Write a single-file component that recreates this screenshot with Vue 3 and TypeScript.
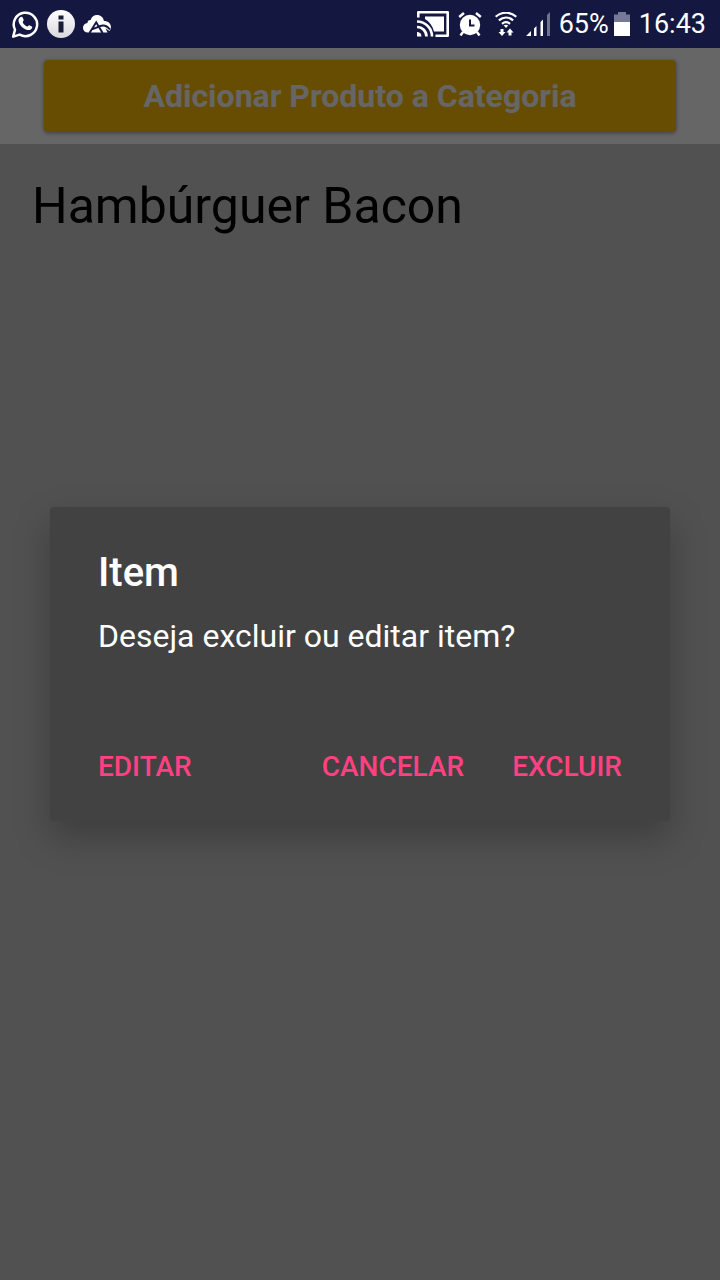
<script setup lang="ts">
import { ref } from 'vue'

interface Product {
  id: number
  name: string
}

const products = ref<Product[]>([{ id: 1, name: 'Hambúrguer Bacon' }])
const battery = '65%'
const time = '16:43'
</script>

<template>
  <div class="screen">
    <header class="status">
      <div class="notifications">
        <svg width="28" height="30" viewBox="0 0 28 30" aria-label="WhatsApp">
          <path d="M2.200 27.600 4 20.700A11.700 11.700 0 1 1 8.700 25.600Z" fill="none" stroke="#fff" stroke-width="2.500" stroke-linejoin="round" />
          <path d="M9.200 8.300C10 7.500 11.300 7.500 11.700 8.500L12.700 11C12.900 11.700 11.600 12.900 11.700 13.300C12.600 15.300 14 16.700 16.100 17.600C16.700 17.800 17.500 16 18.200 16.200L20.900 17.500C21.700 18 20.900 19.900 19.900 20.500C17.700 21.900 14.400 20.600 12.100 18.900C9.800 17.100 7.900 14.600 7.500 12C7.300 10.500 8.200 9.100 9.200 8.300Z" fill="#fff" />
        </svg>
        <svg width="28" height="28" viewBox="0 0 28 28" aria-label="Informação">
          <defs>
            <linearGradient id="disc" x1="0" y1="0" x2="0" y2="1">
              <stop offset="0" stop-color="#fff" />
              <stop offset="1" stop-color="#d9d9de" />
            </linearGradient>
          </defs>
          <circle cx="14" cy="14" r="14" fill="url(#disc)" />
          <path d="M11.500 5.500h5v4h-5ZM11.500 11.500h5v11h-5Z" fill="#1a1d38" />
        </svg>
        <svg width="28" height="20" viewBox="0 0 28 20" aria-label="Nuvem">
          <path d="M5 18.600C2 18.600 0 16.700 0 13.800C0 11 1.900 9.200 4.500 9C4.300 7.200 5.700 5.700 7.600 5.900C8.700 2.700 11 1 14 1C17.800 1 20.400 3.500 20.900 7C24.900 6.900 27.700 9.300 27.900 12.700C28.100 14.300 27.500 15.900 26.400 17.100L22.600 14.200L24.500 18.600Z" fill="#fff" />
          <path d="M6.500 19 13.200 8.300 19.600 19M8.700 15.200C13 14.600 15.500 11.800 19.800 11.400C22.700 11.200 25 13 27 15.500" fill="none" stroke="#141840" stroke-width="2" />
        </svg>
      </div>
      <div class="system">
        <svg width="32" height="26" viewBox="0 0 32 26" aria-label="Transmitir tela">
          <path d="M1.300 6.500V1.300h29.400v23.400H18.500" fill="none" stroke="#fff" stroke-width="2.600" stroke-linejoin="round" />
          <path d="M8 5.500h19v15H17C15.500 15 12.500 10.500 8 8Z" fill="#fff" />
          <path d="M0 10.500A15 15 0 0 1 15 25.500M0 16A9.500 9.500 0 0 1 9.500 25.500" fill="none" stroke="#fff" stroke-width="2.700" />
          <path d="M0 21A4.500 4.500 0 0 1 4.500 25.500H0Z" fill="#fff" />
        </svg>
        <svg width="24" height="24" viewBox="0 0 24 24" aria-label="Alarme">
          <circle cx="12" cy="13" r="10.200" fill="#fff" />
          <path d="M1.200 5 6 1M22.800 5 18 1M5 20 2.500 23.500M19 20l2.500 3.500" fill="none" stroke="#fff" stroke-width="2.500" />
          <path d="M12 7.500V13.500H16.500" fill="none" stroke="#141840" stroke-width="2" />
        </svg>
        <svg width="26" height="24" viewBox="-4 0 26 24" aria-label="Wi-Fi">
          <path d="M.7 4.800C6.700-.6 15.300-.6 21.300 4.800M3.900 8.400C8.300 4.500 13.700 4.500 18.100 8.400M7 11.800C9.500 9.700 12.500 9.700 15 11.800" fill="none" stroke="#fff" stroke-width="2.200" />
          <path d="M8.800 13.500C10.200 12.500 11.800 12.500 13.200 13.500L11 16ZM5.500 17h3v3h2L7 24 3.500 20h2ZM13.500 23.500v-3h-2L15 16.500l3.500 4h-2v3Z" fill="#fff" />
        </svg>
        <svg width="24" height="24" viewBox="0 0 24 24" aria-label="Sinal">
          <path d="M0 24 5 19V24ZM8 24V16.500L10.500 14V24ZM14.500 24V10L17 7.500V24Z" fill="#fff" />
          <path d="M21 24V3L24 0V24Z" fill="#70728f" />
        </svg>
        <span class="battery-text">{{ battery }}</span>
        <svg width="16" height="24" viewBox="0 0 16 24" aria-label="Bateria">
          <path d="M0 10V2.500H4V0H12V2.500H16V10Z" fill="#777895" />
          <path d="M0 10H16V24H0Z" fill="#fff" />
        </svg>
        <span class="clock">{{ time }}</span>
      </div>
    </header>

    <main class="content">
      <div class="toolbar">
        <button class="add" type="button">Adicionar Produto a Categoria</button>
      </div>
      <ul class="products">
        <li v-for="product in products" :key="product.id">{{ product.name }}</li>
      </ul>

      <div class="scrim">
        <section class="dialog" role="dialog" aria-modal="true" aria-labelledby="dialog-title" aria-describedby="dialog-message">
          <h1 id="dialog-title">Item</h1>
          <p id="dialog-message">Deseja excluir ou editar item?</p>
          <div class="actions">
            <button class="edit" type="button">EDITAR</button>
            <button type="button">CANCELAR</button>
            <button type="button">EXCLUIR</button>
          </div>
        </section>
      </div>
    </main>
  </div>
</template>

<style>
body {
  margin: 0;
}
</style>

<style scoped>
.screen {
  display: flex;
  flex-direction: column;
  min-height: 100vh;
  font-family: Roboto, "Noto Sans", sans-serif;
}

.status {
  display: flex;
  align-items: center;
  justify-content: space-between;
  height: 48px;
  padding: 0 14px 0 11px;
  background: #141840;
  color: #fff;
}

.notifications,
.system {
  display: flex;
  align-items: center;
  gap: 8px;
}

.system {
  gap: 9px;
  font-size: 27px;
  line-height: 48px;
}

.battery-text {
  margin-right: -4px;
}

svg {
  display: block;
  flex: none;
}

.content {
  position: relative;
  display: flex;
  flex: 1;
  flex-direction: column;
  background: #cbcbcb;
}

.toolbar {
  padding: 12px 44px;
  background: #fff;
}

.add {
  display: block;
  width: 100%;
  height: 72px;
  padding: 0;
  border: 0;
  border-radius: 4px;
  background: #ffc107;
  box-shadow: 0 1px 4px rgba(0, 0, 0, 0.4);
  color: #fff;
  font: bold 32px/40px Roboto, "Noto Sans", sans-serif;
}

.products {
  margin: 0;
  padding: 32px;
  list-style: none;
  color: #000;
  font-size: 50px;
  line-height: 60px;
}

.scrim {
  position: absolute;
  inset: 0;
  display: flex;
  align-items: center;
  justify-content: center;
  padding: 0 50px;
  background: rgba(0, 0, 0, 0.6);
}

.dialog {
  flex: 1;
  padding: 42px 32px 6px;
  border-radius: 4px;
  background: #424242;
  box-shadow: 0 16px 36px rgba(0, 0, 0, 0.25);
  color: #fff;
}

h1 {
  margin: 0 16px 19px;
  font-size: 40px;
  font-weight: 500;
  line-height: 48px;
}

p {
  margin: 0 16px 63px;
  font-size: 32px;
  line-height: 40px;
}

.actions {
  display: flex;
  gap: 16px;
}

.actions button {
  height: 96px;
  padding: 0 16px;
  border: 0;
  background: none;
  color: #ff4081;
  font: 500 28px/40px Roboto, "Noto Sans", sans-serif;
}

.actions .edit {
  margin-right: auto;
}
</style>
